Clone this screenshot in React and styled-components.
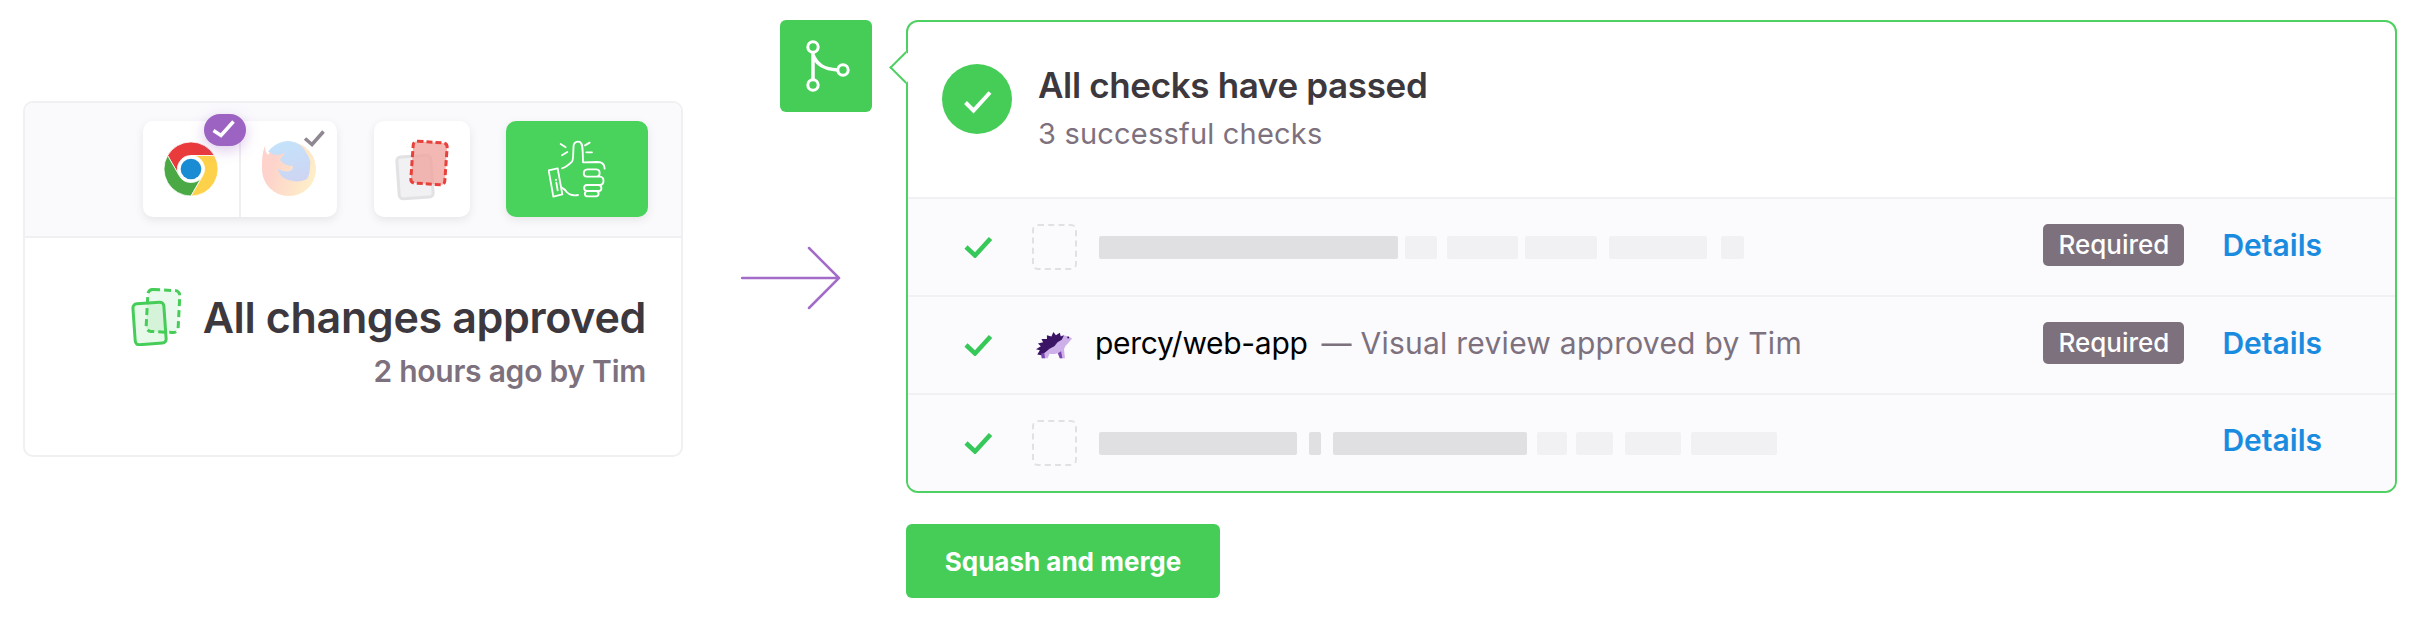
import styled, { createGlobalStyle } from "styled-components";

const GlobalStyle = createGlobalStyle`
  html, body {
    margin: 0;
    padding: 0;
    background: #fff;
  }
  body {
    font-family: "Inter", "Liberation Sans", sans-serif;
    color: #3c383d;
  }
`;

const Page = styled.div`
  display: grid;
  grid-template-columns: 660px 97px 92px 34px 1491px;
  padding: 20px 0 0 23px;
  width: 2421px;
  height: 621px;
  box-sizing: border-box;
  overflow: hidden;
`;

/* left card */
const Card = styled.section`
  grid-column: 1;
  grid-row: 1;
  align-self: start;
  margin-top: 81px;
  height: 356px;
  box-sizing: border-box;
  border: 2px solid #f0eff2;
  border-radius: 10px;
  background: #fff;
`;

const Toolbar = styled.div`
  display: flex;
  justify-content: flex-end;
  gap: 36.5px;
  height: 135px;
  box-sizing: border-box;
  padding: 18px 33px 0 0;
  background: #fafafd;
  border-bottom: 2px solid #f0eff2;
  border-radius: 8px 8px 0 0;
`;

const Tile = styled.div`
  position: relative;
  display: flex;
  width: ${(p) => p.$width}px;
  height: 96px;
  border-radius: 10px;
  background: ${(p) => (p.$green ? "#49d25c" : "#fff")};
  box-shadow: 0 3px 8px rgba(60, 56, 61, 0.1);
`;

const TileCell = styled.div`
  position: relative;
  flex: 1;
  display: flex;
  align-items: center;
  justify-content: center;

  & + & {
    border-left: 2px solid #efeef1;
  }
`;

const Badge = styled.span`
  position: absolute;
  left: 61px;
  top: -7px;
  display: flex;
  width: 42px;
  height: 32px;
  border-radius: 16px;
  background: #9d63c3;
  box-shadow: 0 4px 14px rgba(157, 99, 195, 0.35);
`;

const GrayTick = styled.svg`
  position: absolute;
  right: 12px;
  top: 9px;
`;

const Summary = styled.div`
  display: flex;
  flex-direction: column;
  align-items: flex-end;
  padding: 50px 35px 0 0;
`;

const SummaryTitle = styled.div`
  display: flex;
  align-items: center;
  gap: 22px;
`;

const SummaryHeading = styled.h2`
  margin: 0;
  font-size: 43px;
  line-height: 50px;
  font-weight: 600;
  letter-spacing: -0.35px;
  color: #3c383d;
`;

const SummaryMeta = styled.div`
  margin-top: 7px;
  font-size: 30px;
  line-height: 36px;
  font-weight: 600;
  letter-spacing: -0.25px;
  color: #7d717e;
`;

const Arrow = styled.svg`
  grid-column: 2 / 4;
  grid-row: 1;
  align-self: start;
  margin: 226px 0 0 58px;
`;

/* merge box */
const MergeBox = styled.div`
  grid-column: 3;
  grid-row: 1;
  align-self: start;
  width: 92px;
  height: 92px;
  border-radius: 6px;
  background: #45cd58;
`;

/* checks panel */
const Checks = styled.div`
  grid-column: 5;
  grid-row: 1;
  display: flex;
  flex-direction: column;
  align-items: flex-start;
`;

const Panel = styled.section`
  position: relative;
  width: 100%;
  height: 473px;
  box-sizing: border-box;
  border: 2px solid #4fd062;
  border-radius: 12px;
  background: #fff;

  &::before {
    content: "";
    position: absolute;
    left: -14px;
    top: 34px;
    width: 23px;
    height: 23px;
    box-sizing: border-box;
    background: #fff;
    border-left: 2px solid #4fd062;
    border-bottom: 2px solid #4fd062;
    transform: rotate(45deg);
  }
`;

const PanelHead = styled.header`
  display: flex;
  align-items: flex-start;
  gap: 26px;
  height: 175px;
  box-sizing: border-box;
  padding: 42px 0 0 34px;
`;

const PassCircle = styled.div`
  width: 70px;
  height: 70px;
  border-radius: 50%;
  background: #45cd58;
`;

const PanelTitle = styled.h1`
  margin: 0;
  font-size: 35px;
  line-height: 42px;
  font-weight: 600;
  letter-spacing: -0.35px;
  color: #3c383d;
`;

const PanelSub = styled.div`
  margin-top: 10px;
  font-size: 29px;
  line-height: 36px;
  font-weight: 400;
  letter-spacing: 0.2px;
  color: #7d717e;
`;

const Row = styled.div`
  display: flex;
  align-items: center;
  height: ${(p) => p.$height}px;
  box-sizing: border-box;
  padding: 0 73px 0 56px;
  border-top: 2px solid #f1f0f3;
  background: #fbfafd;

  &:last-child {
    border-radius: 0 0 10px 10px;
  }
`;

const RowTick = styled.svg`
  flex: none;
  margin-right: 40px;
`;

const Avatar = styled.div`
  flex: none;
  display: flex;
  align-items: center;
  justify-content: center;
  width: 45px;
  height: 46px;
  box-sizing: border-box;
  margin-right: ${(p) => p.$gap}px;
  border-radius: 6px;
  border: ${(p) => (p.$empty ? "2px dashed #e2e0e4" : "none")};
`;

const Bars = styled.div`
  display: flex;
`;

const Bar = styled.span`
  display: block;
  width: ${(p) => p.$w}px;
  height: 23px;
  margin-right: ${(p) => p.$gap}px;
  border-radius: 2px;
  background: ${(p) => (p.$dark ? "#e0dfe2" : "#f1f0f3")};
`;

const RepoName = styled.span`
  font-size: 30px;
  font-weight: 400;
  letter-spacing: -0.3px;
  color: #000;
  margin-bottom: 4px;
`;

const RepoNote = styled.span`
  margin-left: 14px;
  margin-bottom: 4px;
  font-size: 30px;
  letter-spacing: 0.25px;
  color: #7d717e;
`;

const RowEnd = styled.div`
  display: flex;
  align-items: center;
  gap: 38px;
  margin-left: auto;
  margin-bottom: ${(p) => p.$lift * 2}px;
`;

const Required = styled.span`
  width: 141px;
  height: 42px;
  line-height: 42px;
  border-radius: 5px;
  text-align: center;
  font-size: 26px;
  font-weight: 500;
  color: #fff;
  background: #7d717e;
`;

const DetailsLink = styled.a`
  font-size: 30px;
  font-weight: 600;
  letter-spacing: 0;
  color: #1a8cdf;
  text-decoration: none;
`;

const MergeButton = styled.button`
  width: 314px;
  height: 74px;
  margin-top: 31px;
  border: 0;
  border-radius: 6px;
  background: #45cd58;
  color: #fff;
  font-family: inherit;
  font-size: 26px;
  font-weight: 700;
`;

const ROW_ONE = [
  { w: 299, gap: 7, dark: true },
  { w: 32, gap: 10 },
  { w: 71, gap: 7 },
  { w: 72, gap: 12 },
  { w: 98, gap: 14 },
  { w: 23, gap: 0 },
];

const ROW_THREE = [
  { w: 198, gap: 12, dark: true },
  { w: 12, gap: 12, dark: true },
  { w: 194, gap: 10, dark: true },
  { w: 30, gap: 9 },
  { w: 37, gap: 12 },
  { w: 56, gap: 10 },
  { w: 86, gap: 0 },
];

const Tick = () => (
  <RowTick width="28" height="21" viewBox="0 0 28 21" fill="none">
    <path d="M2 10l9 8.500L26.500 1.500" stroke="#36c95a" strokeWidth="4.500" />
  </RowTick>
);

const ChromeIcon = () => (
  <svg width="54" height="54" viewBox="-24 -24 48 48">
    <g stroke="#fff" strokeWidth="0.7">
      <path d="M20.800-12A24 24 0 0 0-20.800-12L-10.400 6A12 12 0 0 1 0-12Z" fill="#e93a3c" />
      <path d="M-20.800-12A24 24 0 0 0 0 24L10.400 6A12 12 0 0 1-10.400 6Z" fill="#4aa945" />
      <path d="M0 24A24 24 0 0 0 20.800-12L0-12A12 12 0 0 1 10.400 6Z" fill="#fdd14a" />
    </g>
    <circle r="9.200" fill="#1a8cd3" />
  </svg>
);

const FirefoxIcon = () => (
  <svg width="56" height="56" viewBox="0 0 56 56">
    <defs>
      <linearGradient id="foxBody" x1="0" y1="0.3" x2="1" y2="0.6">
        <stop offset="0.2" stopColor="#fdd3cb" />
        <stop offset="1" stopColor="#feefc8" />
      </linearGradient>
      <linearGradient id="foxGlobe" x1="0.3" y1="0" x2="0.6" y2="1">
        <stop offset="0" stopColor="#c4e3fb" />
        <stop offset="1" stopColor="#cdd5f3" />
      </linearGradient>
    </defs>
    <path d="M4 5c0 4 1 7 3 9C11 6 19 1 28 1c15 0 27 12 27 27S43 55 28 55 1 43 1 28c0-8 0-16 3-23z" fill="url(#foxBody)" />
    <path d="M7 11C11 5 19 0 27 0c8 0 15 5 19 13 3 5 4 8 3 12 0 5-1 10-3 13-4 2-9 3-14 2-6-1-11-3-13-7-1-2-2-4-2-5 4 2 9 3 12 2 3-1 3-4 3-5-4 0-8-1-10-3-1-1-2-2-3-3 1-3 4-5 5-7-3 1-5 2-8 2-3 0-6-1-7-3z" fill="url(#foxGlobe)" />
  </svg>
);

const CardsIcon = () => (
  <svg width="96" height="96" viewBox="0 0 96 96">
    <rect x="24" y="35" width="34" height="42" rx="4" transform="rotate(-4 41 56)" fill="#f1f0f3" stroke="#e2e1e4" strokeWidth="3" />
    <rect x="38" y="21" width="34" height="42" rx="4" transform="rotate(4 55 42)" fill="#f0a6a0" fillOpacity="0.8" stroke="#e8403a" strokeWidth="3" strokeDasharray="6 3" />
  </svg>
);

const ThumbIcon = () => (
  <svg width="58" height="58" viewBox="0 0 174 174" fill="none" stroke="#fff" strokeWidth="5.500" strokeLinecap="round" strokeLinejoin="round" style={{ margin: "auto" }}>
    <path d="M2 91l27-6 14 78-27 7z" />
    <path d="M24 119v1M25 128l4 23" />
    <path d="M42 85c12-3 22-12 30-20 5-7 3-30 5-50 2-9 13-13 20-8 8 6 7 22 8 60l43-1c14 0 22 7 22 20" />
    <path d="M40 142c6 3 12 6 16 14 8 9 24 12 34 9" />
    <path d="M118 88h28c12 1 12 21 0 22h-30c-12-1-12-21 2-22zM116 110h40c14 1 14 24 0 25h-40M116 135h36c11 1 11 18 0 18h-36c-10-1-10-17 0-18zM118 153h26c11 1 10 16 0 16h-26c-10-1-10-15 0-16z" />
    <path d="M38 12l15 10M42 46l16-10M111 16l14-8M115 37h17" />
  </svg>
);

const StackIcon = () => (
  <svg width="50" height="58" viewBox="0 0 50 58">
    <rect x="16" y="2" width="32" height="42" rx="5" transform="rotate(3 32 23)" fill="#eaf9ed" stroke="#45cd58" strokeWidth="3" strokeDasharray="7 4" />
    <rect x="3" y="15" width="31" height="41" rx="4" transform="rotate(-4 18 35)" fill="#45cd58" fillOpacity="0.13" stroke="#45cd58" strokeWidth="3" />
  </svg>
);

const Hedgehog = () => (
  <svg width="37" height="29" viewBox="18 15 115 90">
    <path d="M95 30Q115 25 130 38L118 52Q108 60 105 72L108 100H92L86 84Q70 88 60 86L54 100H36L30 80Z" fill="#cdb0ea" />
    <path d="M22 88L30 75 18 72 33 62 24 54 40 50 35 40 52 40 52 28 66 32 72 18 80 28 92 20 95 32 105 28 98 42 85 50 75 62 60 70 48 80 35 90Z" fill="#3c1466" />
    <circle cx="118" cy="35" r="3" fill="#3c1466" />
    <path d="M86 84L92 100H100L96 78ZM36 100H46L44 84 34 84Z" fill="#7a45ad" />
  </svg>
);

const App = () => (
  <>
    <GlobalStyle />
    <Page>
      <Card>
        <Toolbar>
          <Tile $width={194}>
            <TileCell>
              <ChromeIcon />
            </TileCell>
            <TileCell>
              <FirefoxIcon />
              <GrayTick width="22" height="17" viewBox="0 0 22 17" fill="none">
                <path d="M2 8.500l7 6L20.500 1.500" stroke="#8f8792" strokeWidth="3.500" />
              </GrayTick>
            </TileCell>
            <Badge>
              <svg width="42" height="32" viewBox="0 0 42 32" fill="none">
                <path d="M9.500 16.500l7.500 5L29.500 7.500" stroke="#fff" strokeWidth="3.500" />
              </svg>
            </Badge>
          </Tile>
          <Tile $width={96}>
            <CardsIcon />
          </Tile>
          <Tile $width={142} $green>
            <ThumbIcon />
          </Tile>
        </Toolbar>
        <Summary>
          <SummaryTitle>
            <StackIcon />
            <SummaryHeading>All changes approved</SummaryHeading>
          </SummaryTitle>
          <SummaryMeta>2 hours ago by Tim</SummaryMeta>
        </Summary>
      </Card>

      <Arrow width="100" height="64" viewBox="0 0 100 64" fill="none">
        <path d="M1 32H98M68 2L98 32 68 62" stroke="#a26cc8" strokeWidth="2.500" strokeLinecap="round" />
      </Arrow>

      <MergeBox>
        <svg width="92" height="92" viewBox="0 0 92 92" fill="none" stroke="#fff" strokeWidth="3">
          <circle cx="33" cy="27" r="5.200" />
          <circle cx="33" cy="65" r="5.200" />
          <circle cx="63" cy="50" r="5.200" />
          <path d="M33 32.500V59.500M33 35c4 10 11 14 24.500 15" strokeWidth="3.500" />
        </svg>
      </MergeBox>

      <Checks>
        <Panel>
          <PanelHead>
            <PassCircle>
              <svg width="70" height="70" viewBox="0 0 70 70" fill="none">
                <path d="M23.500 38.500l8 8L48 28.500" stroke="#fff" strokeWidth="4" />
              </svg>
            </PassCircle>
            <div>
              <PanelTitle>All checks have passed</PanelTitle>
              <PanelSub>3 successful checks</PanelSub>
            </div>
          </PanelHead>
          <Row $height={98}>
            <Tick />
            <Avatar $empty $gap={22} />
            <Bars>
              {ROW_ONE.map((b, i) => (
                <Bar key={i} $w={b.w} $gap={b.gap} $dark={b.dark} />
              ))}
            </Bars>
            <RowEnd $lift={2}>
              <Required>Required</Required>
              <DetailsLink>Details</DetailsLink>
            </RowEnd>
          </Row>
          <Row $height={98}>
            <Tick />
            <Avatar $gap={18}>
              <Hedgehog />
            </Avatar>
            <RepoName>percy/web-app</RepoName>
            <RepoNote>— Visual review approved by Tim</RepoNote>
            <RowEnd $lift={2}>
              <Required>Required</Required>
              <DetailsLink>Details</DetailsLink>
            </RowEnd>
          </Row>
          <Row $height={98}>
            <Tick />
            <Avatar $empty $gap={22} />
            <Bars>
              {ROW_THREE.map((b, i) => (
                <Bar key={i} $w={b.w} $gap={b.gap} $dark={b.dark} />
              ))}
            </Bars>
            <RowEnd $lift={3}>
              <DetailsLink>Details</DetailsLink>
            </RowEnd>
          </Row>
        </Panel>
        <MergeButton>Squash and merge</MergeButton>
      </Checks>
    </Page>
  </>
);

export default App;
